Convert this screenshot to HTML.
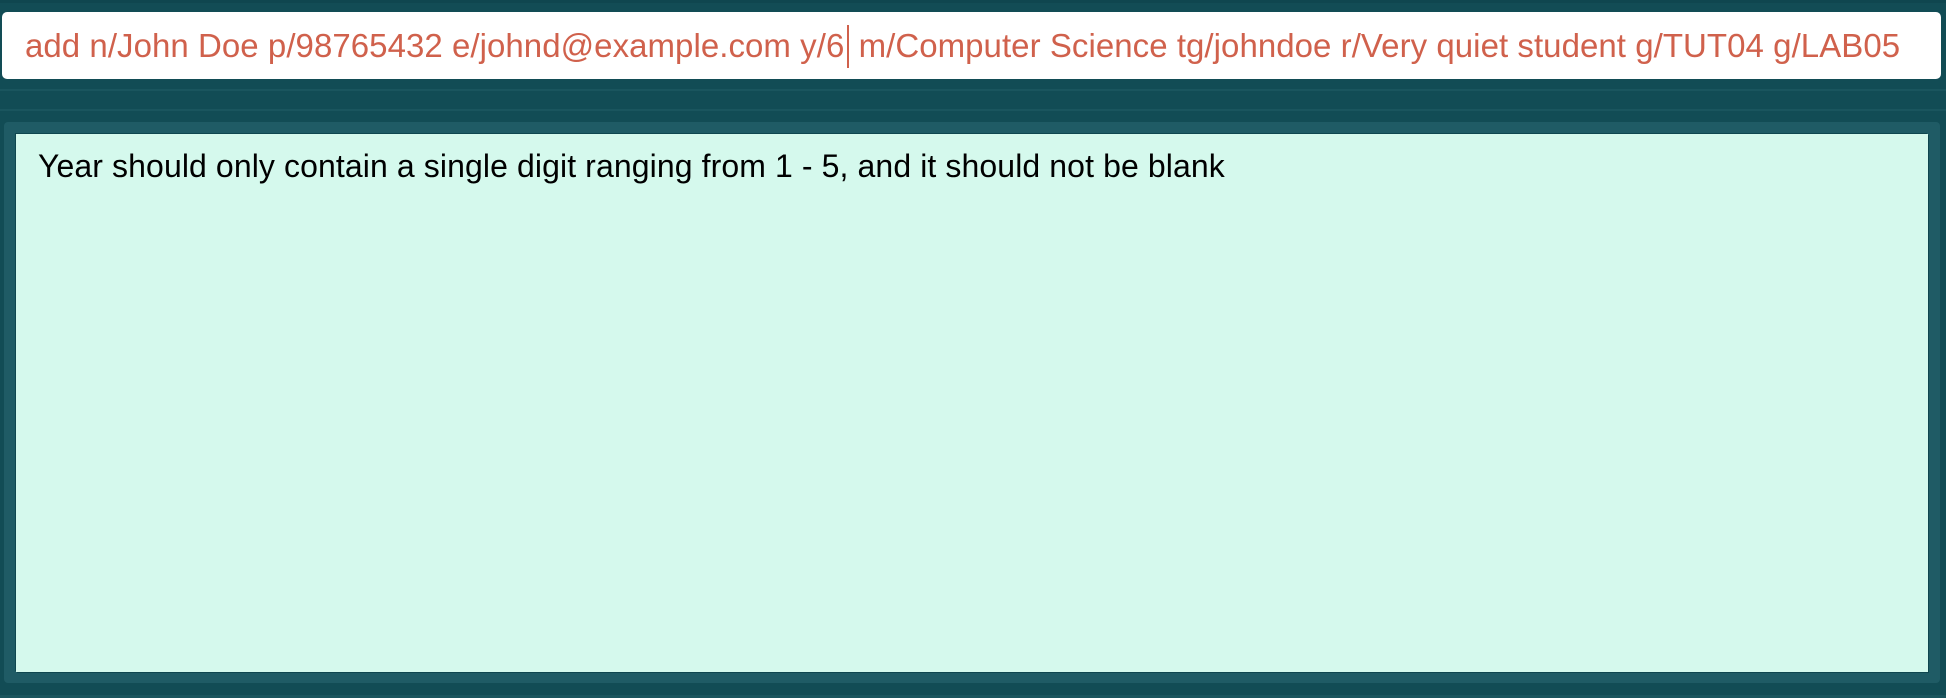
<!DOCTYPE html>
<html><head><style>
html,body{margin:0;padding:0;width:1946px;height:698px;overflow:hidden;background:#124c55;font-family:"Liberation Sans",sans-serif;}
.top{position:absolute;left:0;top:0;width:1946px;height:3px;background:#0f464f;}
.inp{position:absolute;left:2px;top:12px;width:1939px;height:67px;background:#fff;border-radius:5px;}
.inp .t{position:absolute;left:23px;top:0;height:67px;line-height:67px;font-size:33px;color:#d0614c;white-space:nowrap;letter-spacing:0.05px;}
.cur{display:inline-block;width:2px;height:43px;background:#d0614c;vertical-align:middle;margin:0 0 0 3px;position:relative;top:-2px;}
.line1{position:absolute;left:0;top:89px;width:1946px;height:2px;background:#1a555e;}
.line2{position:absolute;left:0;top:109px;width:1946px;height:2px;background:#1a555e;}
.panel{position:absolute;left:4px;top:122px;width:1936px;height:561px;background:#1f5b65;border-radius:4px;}
.mint{position:absolute;left:16px;top:134px;width:1912px;height:538px;background:#d5f9ed;box-shadow:-1px -1px 0 #0f464f,1px 1px 0 #0f464f;}
.mint span{position:absolute;left:22px;top:14px;font-size:32px;color:#000;white-space:nowrap;letter-spacing:0.1px;}
.bot{position:absolute;left:0;top:695px;width:1946px;height:3px;background:#1a555e;}
</style></head><body>
<div class="top"></div>
<div class="inp"><div class="t">add n/John Doe p/98765432 e/johnd@example.com y/6<span class="cur"></span> m/Computer Science tg/johndoe r/Very quiet student g/TUT04 g/LAB05</div></div>
<div class="line1"></div><div class="line2"></div>
<div class="panel"></div>
<div class="mint"><span>Year should only contain a single digit ranging from 1 - 5, and it should not be blank</span></div>
<div class="bot"></div>
</body></html>
